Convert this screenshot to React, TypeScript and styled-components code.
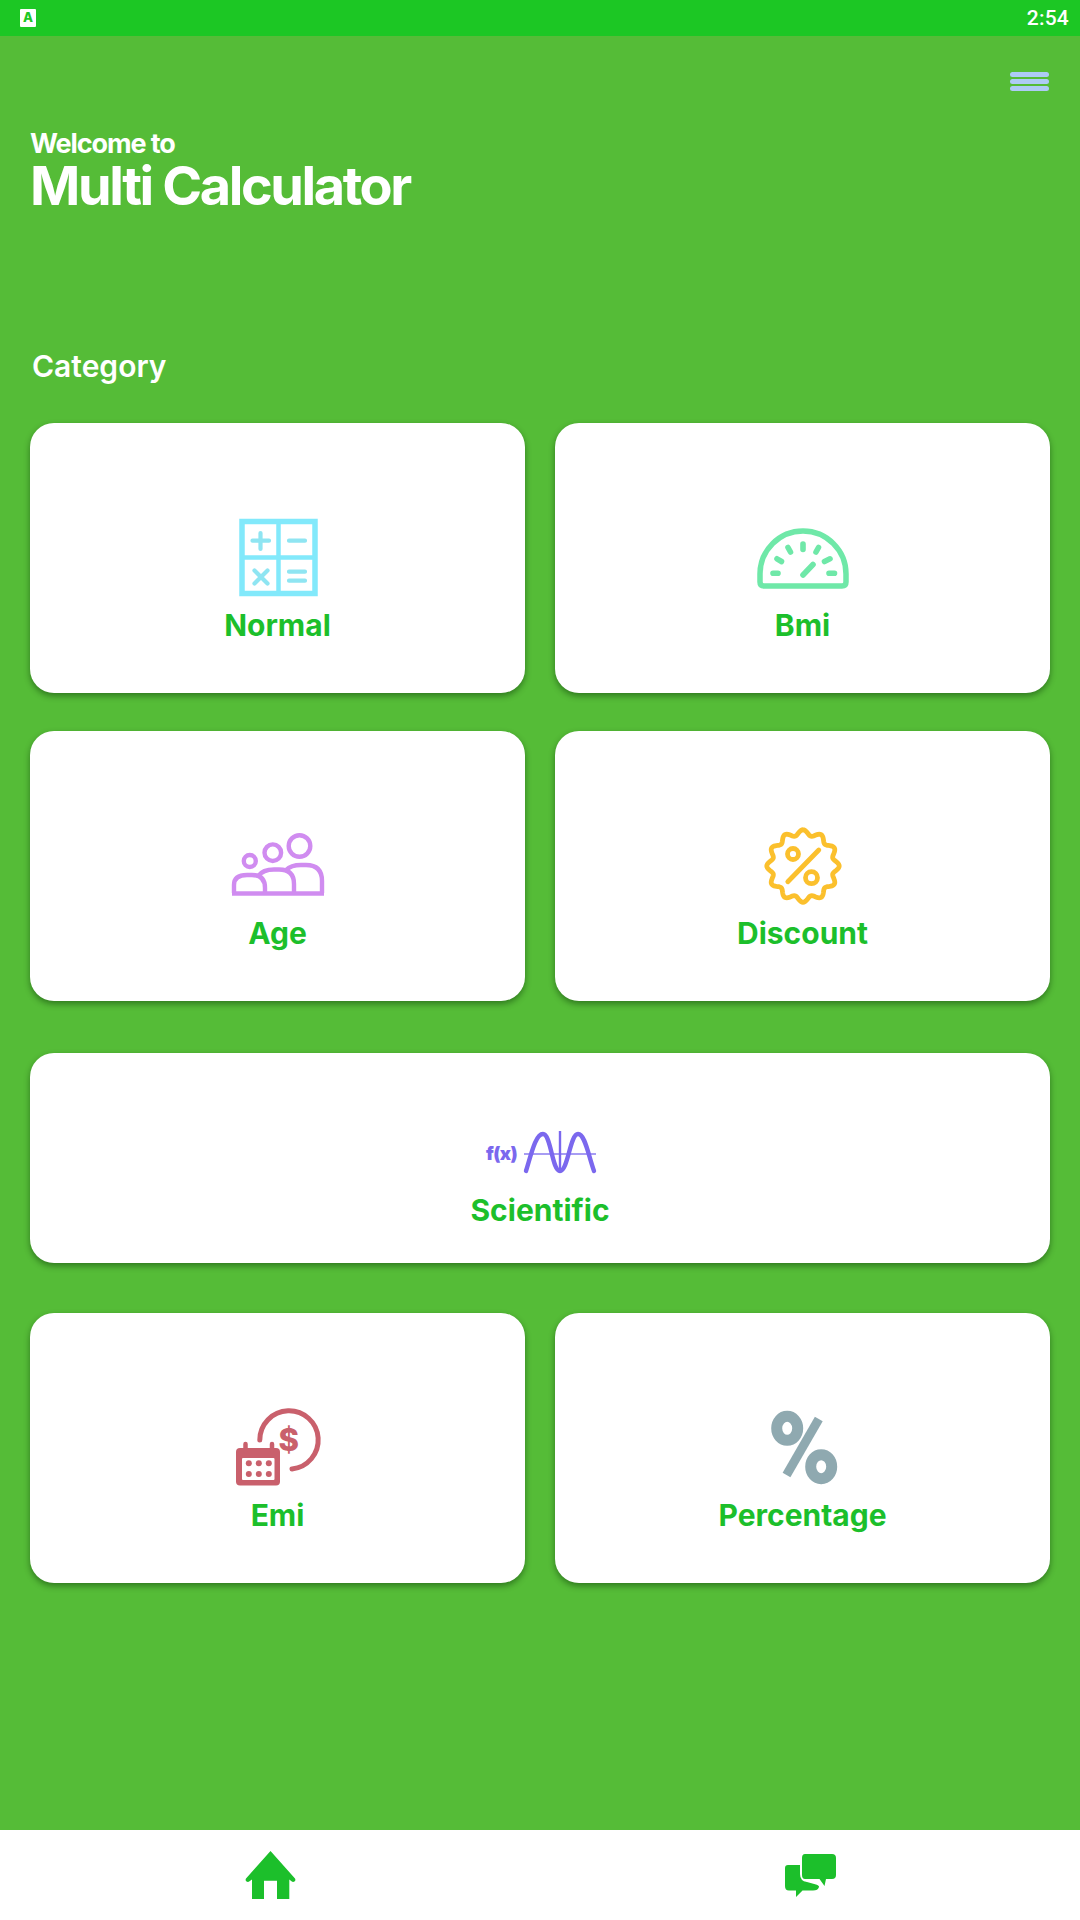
import React from "react";
import styled, { createGlobalStyle } from "styled-components";

const Global = createGlobalStyle`
  html, body { margin: 0; padding: 0; }
  body { font-family: Inter, "Liberation Sans", sans-serif; background: #55bc37; }
`;

const Page = styled.div`
  width: 1080px;
  height: 1920px;
  display: flex;
  flex-direction: column;
  background: #55bc37;
  overflow: hidden;
`;

const StatusBar = styled.div`
  height: 36px;
  flex: none;
  display: flex;
  align-items: center;
  justify-content: space-between;
  padding: 0 11px 0 20px;
  background: #1cc724;
`;

const AppBadge = styled.div`
  width: 16px;
  height: 18px;
  background: #fff;
  border-radius: 1px;
  color: #1cc724;
  font-size: 13px;
  font-weight: 800;
  line-height: 17px;
  text-align: center;
`;

const Clock = styled.span`
  font-family: Roboto, sans-serif;
  font-size: 21px;
  font-weight: 500;
  letter-spacing: 0.2px;
  color: #fff;
`;

const Main = styled.main`
  flex: 1;
  padding: 0 30px;
  display: flex;
  flex-direction: column;
`;

const MenuButton = styled.div`
  align-self: flex-end;
  margin: 36px 1px 0 0;
  width: 39px;
  display: flex;
  flex-direction: column;
  gap: 2px;
`;

const MenuBar = styled.span`
  display: block;
  height: 5px;
  border-radius: 3px;
  background: #aecbf5;
`;

const Welcome = styled.div`
  margin-top: 38px;
  font-size: 27px;
  line-height: 30px;
  font-weight: 700;
  letter-spacing: -1.1px;
  color: #fff;
`;

const Title = styled.h1`
  margin: 0;
  font-size: 54px;
  line-height: 54px;
  font-weight: 700;
  letter-spacing: -2.4px;
  color: #fff;
`;

const SectionLabel = styled.h2`
  margin: 133px 0 0 2px;
  font-size: 30px;
  line-height: 40px;
  font-weight: 600;
  color: #fff;
`;

const Row = styled.div<{ $top: number; $single?: boolean }>`
  margin-top: ${(p) => p.$top}px;
  display: grid;
  grid-template-columns: ${(p) => (p.$single ? "1fr" : "1fr 1fr")};
  column-gap: 30px;
`;

const Card = styled.div<{ $wide?: boolean }>`
  height: ${(p) => (p.$wide ? 210 : 270)}px;
  box-sizing: border-box;
  padding-top: ${(p) => (p.$wide ? 45 : 90)}px;
  display: flex;
  flex-direction: column;
  align-items: center;
  background: #fff;
  border-radius: 24px;
  box-shadow: 0 3px 6px rgba(0, 40, 0, 0.45);
`;

const IconSvg = styled.svg`
  display: block;
  flex: none;
`;

const CardLabel = styled.span`
  font-size: 30px;
  line-height: 44px;
  font-weight: 700;
  color: #1cbf2b;
`;

const BottomNav = styled.nav`
  height: 90px;
  flex: none;
  display: grid;
  grid-template-columns: 1fr 1fr;
  background: #fff;
`;

const NavItem = styled.div`
  display: flex;
  align-items: center;
  justify-content: center;
`;

const Icon: React.FC<{ children: React.ReactNode }> = ({ children }) => (
  <IconSvg width={120} height={90} viewBox="0 0 120 90" fill="none">
    {children}
  </IconSvg>
);

const NormalIcon = () => (
  <Icon>
    <g stroke="#82e9fb">
      <rect x="24" y="8.500" width="73" height="72" strokeWidth="5.500" />
      <path d="M60.500 9V80M24 44.500H97" strokeWidth="4.500" />
    </g>
    <path
      d="M42.500 20V36M34.500 27.700H51M71 27.700H87M36.500 57.500L49.500 70.500M49.500 57.500L36.500 70.500M71 58.700H87M71 67.700H87"
      stroke="#8fe5f2"
      strokeWidth="4.200"
      strokeLinecap="round"
    />
  </Icon>
);

const BmiIcon = () => (
  <Icon>
    <g stroke="#6fe8a8" strokeLinecap="round">
      <path d="M17 61A43 43 0 0 1 103 61V69Q103 73 99 73H21Q17 73 17 69Z" strokeWidth="5.500" />
      <path
        d="M30 60.300H35M86 60.300H91.500M34 45.800L38.500 48.500M87 45.800L81.500 48.500M45 34.500L47.500 39M75.500 34.500L73 39M60 31V36.500M60 62L70 51.500"
        strokeWidth="5.600"
      />
    </g>
  </Icon>
);

const AgeIcon = () => (
  <Icon>
    <g stroke="#d08cf0" strokeWidth="4.400" strokeLinejoin="round">
      <circle cx="31.800" cy="40" r="6" />
      <circle cx="54.800" cy="31.700" r="8.300" />
      <circle cx="81.500" cy="25" r="10.800" />
      <path d="M16 72V64Q16 54 29 54H34Q47 54 47 67V72" />
      <path d="M40 55Q45 48.500 56 48.500H61Q76 48.500 76 63V72" />
      <path d="M68 49Q73 44 83 44H88Q104 44 104 60V72" />
      <path d="M14 72.500H106" />
    </g>
  </Icon>
);

const badgePath = (() => {
  const pts: string[] = [];
  for (let i = 0; i < 240; i++) {
    const t = (i / 240) * Math.PI * 2;
    const r = 33.500 + 2.700 * Math.cos(12 * t);
    const x = 60 + r * Math.sin(t);
    const y = 45 - r * Math.cos(t);
    pts.push(`${x.toFixed(2)} ${y.toFixed(2)}`);
  }
  return `M${pts.join("L")}Z`;
})();

const DiscountIcon = () => (
  <Icon>
    <g stroke="#fbc02d" strokeWidth="4.800" strokeLinecap="round">
      <path d={badgePath} />
      <circle cx="50" cy="33" r="5.500" />
      <circle cx="68.500" cy="56.700" r="6" />
      <path d="M75.800 29L44.800 60.700" />
    </g>
  </Icon>
);

const FxText = styled.text`
  font-family: Inter, sans-serif;
  font-size: 18.500px;
  font-weight: 900;
  letter-spacing: -0.6px;
`;

const ScientificIcon = () => (
  <Icon>
    <FxText x="6" y="62" fill="#7b68ee">
      f(x)
    </FxText>
    <path d="M44 56H116" stroke="#a79cf3" strokeWidth="1.800" />
    <path d="M80 33V74" stroke="#7b68ee" strokeWidth="2.400" />
    <path
      d="M46 73C52 53 56 36 63 36C71 36 72 73 80 73C88 73 90 36 98 36C105 36 108 56 114 73"
      stroke="#7b68ee"
      strokeWidth="4.400"
      strokeLinecap="round"
    />
  </Icon>
);

const DollarText = styled.text`
  font-family: Inter, sans-serif;
  font-size: 31px;
  font-weight: 800;
`;

const EmiIcon = () => (
  <Icon>
    <path d="M41.800 37A29.200 29.200 0 1 1 74 66" stroke="#c9606c" strokeWidth="5" strokeLinecap="round" />
    <DollarText x="70.800" y="48" fill="#c9606c" textAnchor="middle">
      $
    </DollarText>
    <rect x="18" y="45" width="44" height="37.500" rx="4" fill="#c9606c" />
    <path d="M27.500 41V48M54 41V48" stroke="#c9606c" strokeWidth="4.500" strokeLinecap="round" />
    <rect x="24" y="55" width="32.500" height="22" rx="1" fill="#fff" />
    <g fill="#c9606c">
      {[30.800, 40.800, 50.800].map((x) =>
        [60.300, 71].map((y) => <circle key={`${x}-${y}`} cx={x} cy={y} r="3" />)
      )}
    </g>
  </Icon>
);

const PercentageIcon = () => (
  <Icon>
    <g stroke="#8fa9b0">
      <ellipse cx="44.200" cy="25.300" rx="10.500" ry="12" strokeWidth="11" />
      <ellipse cx="78.200" cy="63.700" rx="10.500" ry="12" strokeWidth="11" />
      <path d="M75.800 16L43.500 72" strokeWidth="9" />
    </g>
  </Icon>
);

const NavSvg = styled.svg`
  display: block;
`;

const HomeIcon = () => (
  <NavSvg width="51" height="48" viewBox="0 0 51 48">
    <path
      d="M25.500 0L50 27.500Q51 29.500 49.500 30.500Q48 31.500 46.500 30.300L44.300 28.500V48H32V29.700H19V48H7V28.500L4.500 30.300Q3 31.500 1.500 30.500Q0 29.500 1 27.500Z"
      fill="#1cbf2b"
    />
  </NavSvg>
);

const ChatIcon = () => (
  <NavSvg width="51" height="43" viewBox="0 0 51 43">
    <path
      d="M3 11H15V20Q15 27 22 28L31 30.500Q34.300 31.500 34 33Q33 36.500 28 36.500H17.500L11 43V36.500H4Q0 36.500 0 32V14Q0 11 3 11Z"
      fill="#1cbf2b"
    />
    <path
      d="M20 0H47Q51 0 51 4V21Q51 25 47 25H41L39.500 32L34.500 25H20Q17 25 17 21V4Q17 0 20 0Z"
      fill="#1cbf2b"
    />
  </NavSvg>
);

const App: React.FC = () => (
  <>
    <Global />
    <Page>
      <StatusBar>
        <AppBadge>A</AppBadge>
        <Clock>2:54</Clock>
      </StatusBar>
      <Main>
        <MenuButton>
          <MenuBar />
          <MenuBar />
          <MenuBar />
        </MenuButton>
        <Welcome>Welcome to</Welcome>
        <Title>Multi Calculator</Title>
        <SectionLabel>Category</SectionLabel>
        <Row $top={37}>
          <Card>
            <NormalIcon />
            <CardLabel>Normal</CardLabel>
          </Card>
          <Card>
            <BmiIcon />
            <CardLabel>Bmi</CardLabel>
          </Card>
        </Row>
        <Row $top={38}>
          <Card>
            <AgeIcon />
            <CardLabel>Age</CardLabel>
          </Card>
          <Card>
            <DiscountIcon />
            <CardLabel>Discount</CardLabel>
          </Card>
        </Row>
        <Row $top={52} $single>
          <Card $wide>
            <ScientificIcon />
            <CardLabel>Scientific</CardLabel>
          </Card>
        </Row>
        <Row $top={50}>
          <Card>
            <EmiIcon />
            <CardLabel>Emi</CardLabel>
          </Card>
          <Card>
            <PercentageIcon />
            <CardLabel>Percentage</CardLabel>
          </Card>
        </Row>
      </Main>
      <BottomNav>
        <NavItem>
          <HomeIcon />
        </NavItem>
        <NavItem>
          <ChatIcon />
        </NavItem>
      </BottomNav>
    </Page>
  </>
);

export default App;
